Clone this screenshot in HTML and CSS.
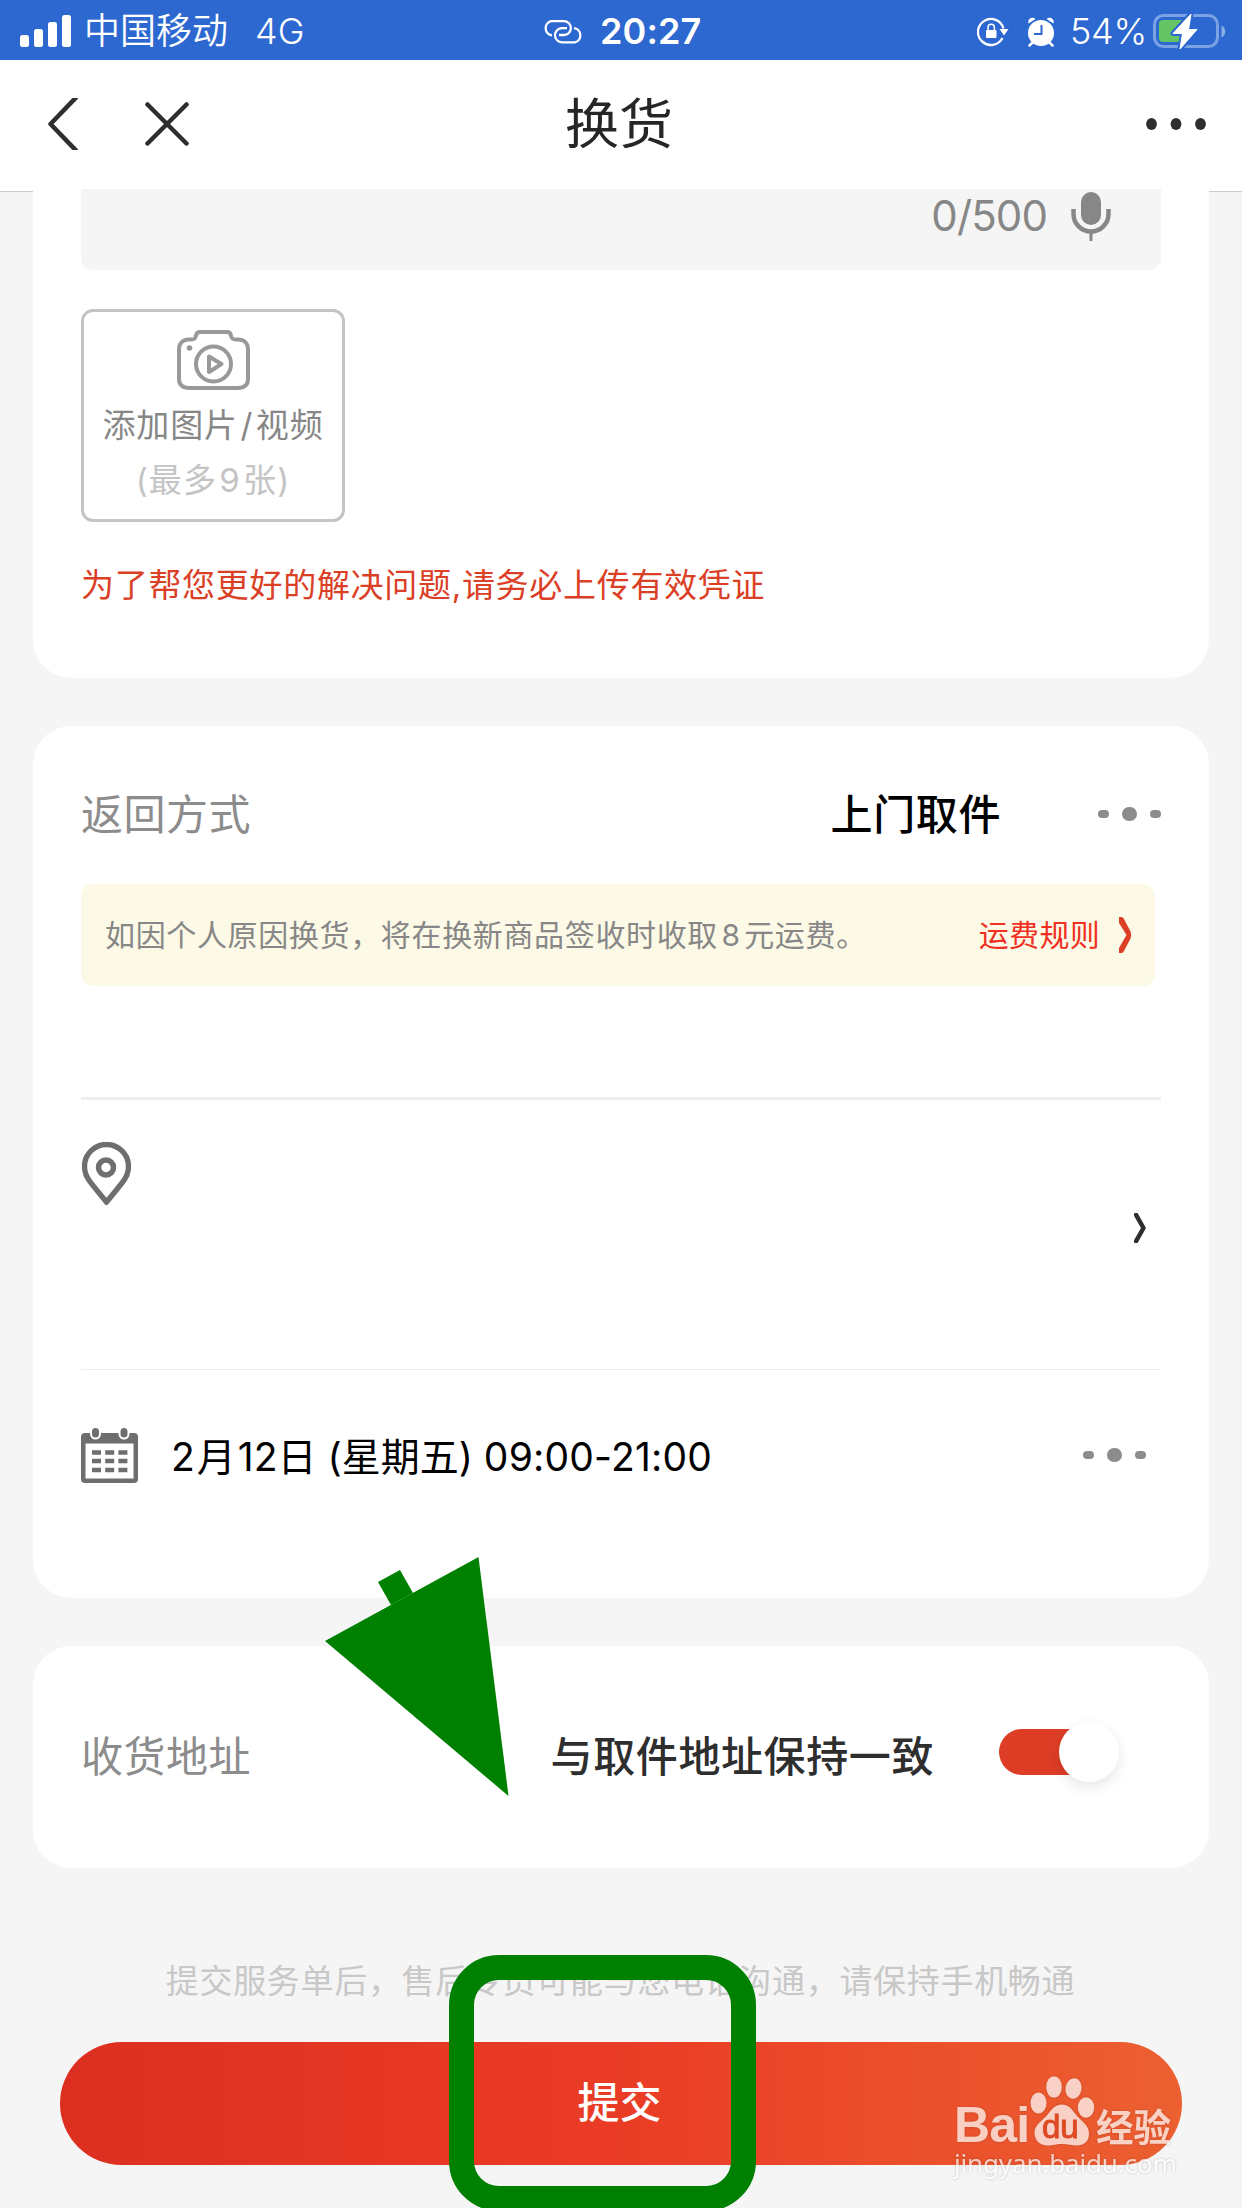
FILE: index.html
```html
<!DOCTYPE html>
<html lang="zh-CN">
<head>
<meta charset="utf-8">
<title>换货</title>
<link rel="stylesheet" href="styles.css">
</head>
<body>
<div class="phone">
  <div class="status">
    <div class="status-left">
      <svg width="52" height="32" viewBox="0 0 52 32" fill="#fff"><rect x="0" y="20" width="9" height="12" rx="2.5"/><rect x="14" y="14" width="9" height="18" rx="2.5"/><rect x="28" y="7" width="9" height="25" rx="2.5"/><rect x="42" y="0" width="9" height="32" rx="2.5"/></svg>
      <span class="carrier">中国移动</span><span class="network">4G</span>
    </div>
    <div class="status-mid">
      <svg width="40" height="24" viewBox="0 0 40 24" fill="none" stroke="#fff" stroke-width="2.3"><path d="M9 15.3A7.2 7.2 0 0 1 8 1.2H21A6.9 6.9 0 0 1 21 15H16"/><path d="M31 8.2A7.2 7.2 0 0 1 32 22.3H19A6.9 6.9 0 0 1 19 8.2H24"/></svg>
      <span class="time">20:27</span>
    </div>
    <div class="status-right">
      <svg width="32" height="30" viewBox="0 0 32 30"><path d="M25.500 21A13 13 0 1 1 26.500 11.500" fill="none" stroke="#fff" stroke-width="2.300"/><path d="M22.500 12h9l-4.500 6.500z" fill="#fff"/><rect x="9" y="13" width="10.500" height="8" rx="1" fill="#fff"/><path d="M11 14v-3.500a3.200 3.200 0 0 1 6.400 0V14" fill="none" stroke="#fff" stroke-width="1.500"/></svg>
      <svg class="alarm" width="28" height="30" viewBox="0 0 28 30"><circle cx="14" cy="16" r="13" fill="#fff"/><path d="M1.500 6.500C0 2 5 -1 8.500 2zM26.500 6.500C28 2 23 -1 19.500 2z" fill="#fff"/><path d="M14.500 8v9H7" fill="none" stroke="#2d68d1" stroke-width="2"/><path d="M5.500 25.500l-3 3M22.500 25.500l3 3" stroke="#fff" stroke-width="2.500" stroke-linecap="round"/></svg>
      <span class="percent">54%</span>
      <svg class="battery" width="74" height="36" viewBox="0 0 74 36"><rect x="1.500" y="1.500" width="63" height="31" rx="9" fill="none" stroke="#7ba3e4" stroke-width="3"/><path d="M68.500 11.500c5 2 5 10 0 12z" fill="#8aaee8"/><rect x="6" y="6" width="27" height="22" rx="4" fill="#65c466"/><path d="M38 0L20 19.500h9.500L27 35 44 15.500h-8.500z" fill="#fff" stroke="#2d68d1" stroke-width="5" paint-order="stroke" stroke-linejoin="round"/><path d="M38 0L20 19.500h9.500L27 35 44 15.500h-8.500z" fill="#fff" stroke="#fff" stroke-linejoin="round"/></svg>
    </div>
  </div>

  <header class="nav">
    <svg class="back" width="30" height="52" viewBox="0 0 30 52" fill="none" stroke="#2e2e2e" stroke-width="4.500"><path d="M28.500 -1L2.500 26l26 27" stroke-linejoin="round"/></svg>
    <svg class="close" width="44" height="44" viewBox="0 0 44 44" stroke="#2e2e2e" stroke-width="4.500" stroke-linecap="round"><path d="M2.500 2.500l39 39M41.500 2.500l-39 39"/></svg>
    <h1 class="title">换货</h1>
    <svg class="more" width="60" height="12" viewBox="0 0 60 12" fill="#2e2e2e"><ellipse cx="5.500" cy="6" rx="5.400" ry="5.900"/><ellipse cx="30" cy="6" rx="5.400" ry="5.900"/><ellipse cx="54.500" cy="6" rx="5.400" ry="5.900"/></svg>
  </header>

  <main class="content">
    <section class="card evidence">
      <div class="textarea">
        <span class="count">0/500</span>
        <svg width="40" height="49" viewBox="0 0 40 49"><rect x="10" y="0" width="20" height="33" rx="10" fill="#878787"/><path d="M2.500 17v5a17 17 0 0 0 35 0v-5" fill="none" stroke="#878787" stroke-width="4.500"/><path d="M20 41v8" stroke="#878787" stroke-width="3"/></svg>
      </div>
      <div class="upload">
        <svg width="73" height="60" viewBox="0 0 73 60" fill="none" stroke="#999" stroke-width="4"><path d="M12 9.500h2.500c3 0 4-1 4.500-4 .5-2.500 2-3.500 4-3.500h27c2 0 3.500 1 4 3.500.5 3 1.500 4 4.500 4H61c6 0 10 4 10 10V49c0 6-4 9-10 9H12c-6 0-10-3-10-9V19.500c0-6 4-10 10-10z"/><circle cx="36.500" cy="34" r="17.500"/><path d="M32 26.500v15.500l12.500-8z" stroke-linejoin="round"/><circle cx="12.500" cy="18" r="2.800" fill="#999" stroke="none"/></svg>
        <span class="upload-title">添加图片<span class="slash">/</span>视频</span>
        <span class="upload-sub">(最多<span class="nine">9</span>张)</span>
      </div>
      <p class="warn">为了帮您更好的解决问题,请务必上传有效凭证</p>
    </section>

    <section class="card return">
      <div class="row method">
        <span class="label">返回方式</span>
        <span class="value">上门取件</span>
        <span class="dots"><i></i><i class="big"></i><i></i></span>
      </div>
      <div class="notice">
        <span class="notice-text">如因个人原因换货，将在换新商品签收时收取<span class="fee">8</span>元运费。</span>
        <span class="rule">运费规则</span>
        <svg width="13" height="36" viewBox="0 0 13 36" fill="#db4026"><path d="M0 0h2.500Q4 0 5 2l6.500 12.500Q13 18 11.500 21.500L5 34q-1 2-2.500 2H0V31L7.500 18 0 6z"/></svg>
      </div>
      <div class="address">
        <svg class="pin" width="49" height="63" viewBox="0 0 49 63" fill="none" stroke="#6e6e6e"><path d="M24.500 60C18 52 11 44 6.500 37.500 3.500 33 2.500 29 2.500 24.500a22 22 0 0 1 44 0c0 4.500-1 8.500-4 13C38 44 31 52 24.500 60z" stroke-width="5.400"/><circle cx="24" cy="25.500" r="7.500" stroke-width="5.500"/></svg>
        <svg class="go" width="12" height="30" viewBox="0 0 12 30" fill="none" stroke="#2e2e2e" stroke-width="4.500"><path d="M1 0l8.500 15L1 30" stroke-linejoin="round"/></svg>
      </div>
      <div class="row schedule">
        <svg width="57" height="55" viewBox="0 0 57 55"><path d="M4 5h49q4 0 4 4v42q0 4-4 4H4q-4 0-4-4V9q0-4 4-4z" fill="#6e6e6e"/><path d="M4.500 15.500h48v35h-48z" fill="#fff"/><g fill="#6e6e6e" stroke="#fff" stroke-width="2"><rect x="10" y="-1" width="9" height="11.500" rx="4.500"/><rect x="38.500" y="-1" width="9" height="11.500" rx="4.500"/></g><path d="M11 24.500h35.500M11 33h35.500M11 42h35.500" stroke="#6e6e6e" stroke-width="4.500" stroke-dasharray="9 4.200"/></svg>
        <span class="slot">2<span class="month">月</span>12日 (星期五) <span class="hours">09:00-21:00</span></span>
        <span class="dots"><i></i><i class="big"></i><i></i></span>
      </div>
    </section>

    <section class="card row receive">
      <span class="label">收货地址</span>
      <span class="value same">与取件地址保持一致</span>
      <span class="toggle"><span class="knob"></span></span>
    </section>

    <p class="tip">提交服务单后，售后专员可能与您电话沟通，请保持手机畅通</p>
    <button class="submit">提交</button>
  </main>

  <svg class="arrow" width="184" height="240" viewBox="0 0 184 240" fill="#008000"><path d="M0 84L153.500 0 183.500 239z"/><path d="M53 25L75 13 88 36 66 48z"/></svg>
  <div class="frame"></div>
  <div class="watermark">
    <div class="brand">
      <span class="bai">Bai</span>
      <svg width="65" height="70" viewBox="0 0 65 70"><g fill="#fff"><ellipse cx="8.500" cy="27" rx="8" ry="10.500"/><ellipse cx="24" cy="11" rx="7.800" ry="10.800"/><ellipse cx="43.500" cy="12.500" rx="8" ry="10.300" transform="rotate(10 43.500 12.500)"/><ellipse cx="56" cy="31.500" rx="8.200" ry="10.300"/><path d="M32 28.500c6 0 9 3.500 13 9 5 7 14 11 14 20 0 8-5 12-12 12-5 0-9-1.500-15-1.500s-9 1.500-14 1.500c-9 0-13.500-6-13.500-13 0-8 8-11.500 14-19 4-5.500 7.500-9 13.500-9z"/></g></svg>
      <span class="du">du</span>
      <span class="jy">经验</span>
    </div>
    <span class="url">jingyan.baidu.com</span>
  </div>
</div>
</body>
</html>
```
FILE: styles.css
```css
* { box-sizing: border-box; }
body {
  margin: 0;
  font-family: Inter, "Noto Sans CJK SC", sans-serif;
  background: #f5f5f5;
}
svg { display: block; flex: none; }
h1, p { margin: 0; font-weight: 400; }
span { white-space: nowrap; }
.phone { position: relative; width: 1242px; height: 2208px; overflow: hidden; }

.status {
  display: grid;
  grid-template-columns: 543px 1fr auto;
  height: 60px;
  background: #2d68d1;
  color: #fff;
  font-size: 36px;
  line-height: 60px;
}
.status-left, .status-mid, .status-right { display: flex; align-items: center; }
.status-left { padding-left: 20px; }
.carrier { margin-left: 12px; font-weight: 350; }
.network { margin-left: 27px; font-weight: 350; }
.status-mid { padding-top: 2px; }
.time { margin: -1px 0 0 17px; font-weight: 600; letter-spacing: 0.1px; }
.status-right { padding: 2px 15px 0 0; }
.alarm { margin-left: 18px; }
.percent { margin: -2px 0 0 15px; width: 78px; font-weight: 350; letter-spacing: -0.3px; }
.battery { margin-left: 5px; }

.nav {
  display: flex;
  align-items: center;
  height: 132px;
  padding: 0 36px 4px 48px;
  background: #fff;
  border-bottom: 1px solid #ccc;
}
.close { margin-left: 67px; }
.title {
  flex: 1;
  margin: 3px 0 0 376px;
  font-size: 54px;
  line-height: 60px;
  color: #262626;
}

.content { margin-top: -3px; padding: 0 33px; }
.card { background: #fff; border-radius: 38px; }
.evidence { height: 489px; padding: 0 48px; border-radius: 0 0 38px 38px; }
.textarea {
  display: flex;
  justify-content: flex-end;
  gap: 24px;
  height: 81px;
  padding: 3px 50px 0 0;
  background: #f5f5f5;
  border-radius: 0 0 12px 12px;
}
.count { font-size: 42px; line-height: 48px; color: #878787; letter-spacing: -0.9px; }
.upload {
  display: flex;
  flex-direction: column;
  align-items: center;
  width: 264px;
  height: 213px;
  margin-top: 39px;
  padding-top: 18px;
  border: 3px solid #c4c4c4;
  border-radius: 12px;
}
.upload-title { margin-top: 10px; font-size: 33px; line-height: 50px; color: #878787; letter-spacing: 0.9px; }
.slash { margin: 0 2.5px; }
.upload-sub { margin-top: 5px; font-size: 33px; line-height: 50px; color: #c4c4c4; letter-spacing: 1.2px; }
.nine { margin: 0 2px; }
.warn { margin-top: 38px; font-size: 33px; line-height: 50px; color: #db4026; letter-spacing: 0.7px; }

.return { height: 872px; margin-top: 48px; padding: 58px 48px 0; }
.row { display: flex; align-items: center; }
.method { height: 60px; }
.method .label, .method .value { margin-top: 1px; }
.label { font-size: 42px; line-height: 60px; color: #8c8c8c; letter-spacing: 0.5px; }
.value { margin-left: auto; font-size: 42px; line-height: 60px; font-weight: 500; color: #000; letter-spacing: 0.6px; }
.dots { display: flex; align-items: center; gap: 13px; margin-left: 97px; }
.dots i { width: 11px; height: 8px; border-radius: 4px; background: #8c8c8c; }
.dots .big { width: 15px; height: 14px; border-radius: 7px; }
.notice {
  display: flex;
  align-items: center;
  width: 1074px;
  height: 102px;
  margin-top: 40px;
  padding: 0 23px 0 24px;
  background: #fcf9e6;
  border-radius: 12px;
  font-size: 30px;
  line-height: 50px;
}
.notice-text { color: #878787; letter-spacing: 0.65px; }
.fee { margin: 0 3.5px; }
.rule { margin: 0 19px 0 auto; color: #f03022; letter-spacing: 0.3px; }
.address {
  display: flex;
  justify-content: space-between;
  height: 273px;
  margin-top: 111px;
  padding: 42px 15px 0 1px;
  border-top: 3px solid #eee;
  border-bottom: 1px solid #ededed;
}
.go { margin-top: 71px; }
.schedule { height: 60px; margin-top: 55px; padding-right: 15px; }
.slot { margin: 3px auto 0 33px; font-size: 39px; line-height: 60px; color: #000; }
.month { margin: 0 2px; }
.hours { letter-spacing: 0.2px; }

.receive { height: 222px; margin-top: 48px; padding: 0 90px 0 48px; }
.same { margin-right: 65px; color: #2e2e2e; }
.receive .label, .same { margin-top: -1px; }
.toggle {
  display: flex;
  justify-content: flex-end;
  align-items: center;
  width: 120px;
  height: 46px;
  margin-top: -10px;
  border-radius: 23px;
  background: linear-gradient(90deg, #dd3d25 90px, transparent 90px);
}
.knob { width: 60px; height: 60px; border-radius: 50%; background: #fff; box-shadow: 0 5px 14px rgba(0, 0, 0, 0.1); }

.tip { margin: 88px 1px 0 0; font-size: 33px; line-height: 50px; color: #c8c8c8; letter-spacing: 0.68px; text-align: center; }
.submit {
  display: block;
  width: 1122px;
  height: 123px;
  margin: 36px auto 0;
  padding: 0 3px 1px 0;
  border: 0;
  border-radius: 62px;
  background: linear-gradient(90deg, #dd2f20, #ea3c25 50%, #ec6031);
  color: #fff;
  font: 500 42px/60px Inter, "Noto Sans CJK SC", sans-serif;
}

/* Annotations and watermark laid over the screen */
.arrow { position: absolute; left: 325px; top: 1557px; }
.frame { position: absolute; left: 449px; top: 1955px; width: 307px; height: 256px; border: 25px solid #008000; border-radius: 50px; }
.watermark { position: absolute; left: 954px; top: 2076px; width: 240px; opacity: 0.72; color: #fff; }
.brand { position: relative; display: flex; height: 70px; filter: drop-shadow(0 0 1px rgba(120, 40, 20, 0.5)); }
.bai { width: 76px; padding-top: 20px; font: 700 50px/58px "Liberation Sans", sans-serif; letter-spacing: -0.8px; }
.du { position: absolute; left: 88px; top: 33px; color: #d9441f; font: 400 33px/36px "Liberation Sans", sans-serif; -webkit-text-stroke: 1px #d9441f; }
.jy { padding: 20px 0 0 1px; font: 700 37.5px/58px "Noto Sans CJK SC", sans-serif; }
.url { display: block; margin-top: -1px; font: 400 26px/36px "Noto Sans", sans-serif; letter-spacing: -0.15px; text-shadow: 0 0 3px rgba(0, 0, 0, 0.3); }
```
